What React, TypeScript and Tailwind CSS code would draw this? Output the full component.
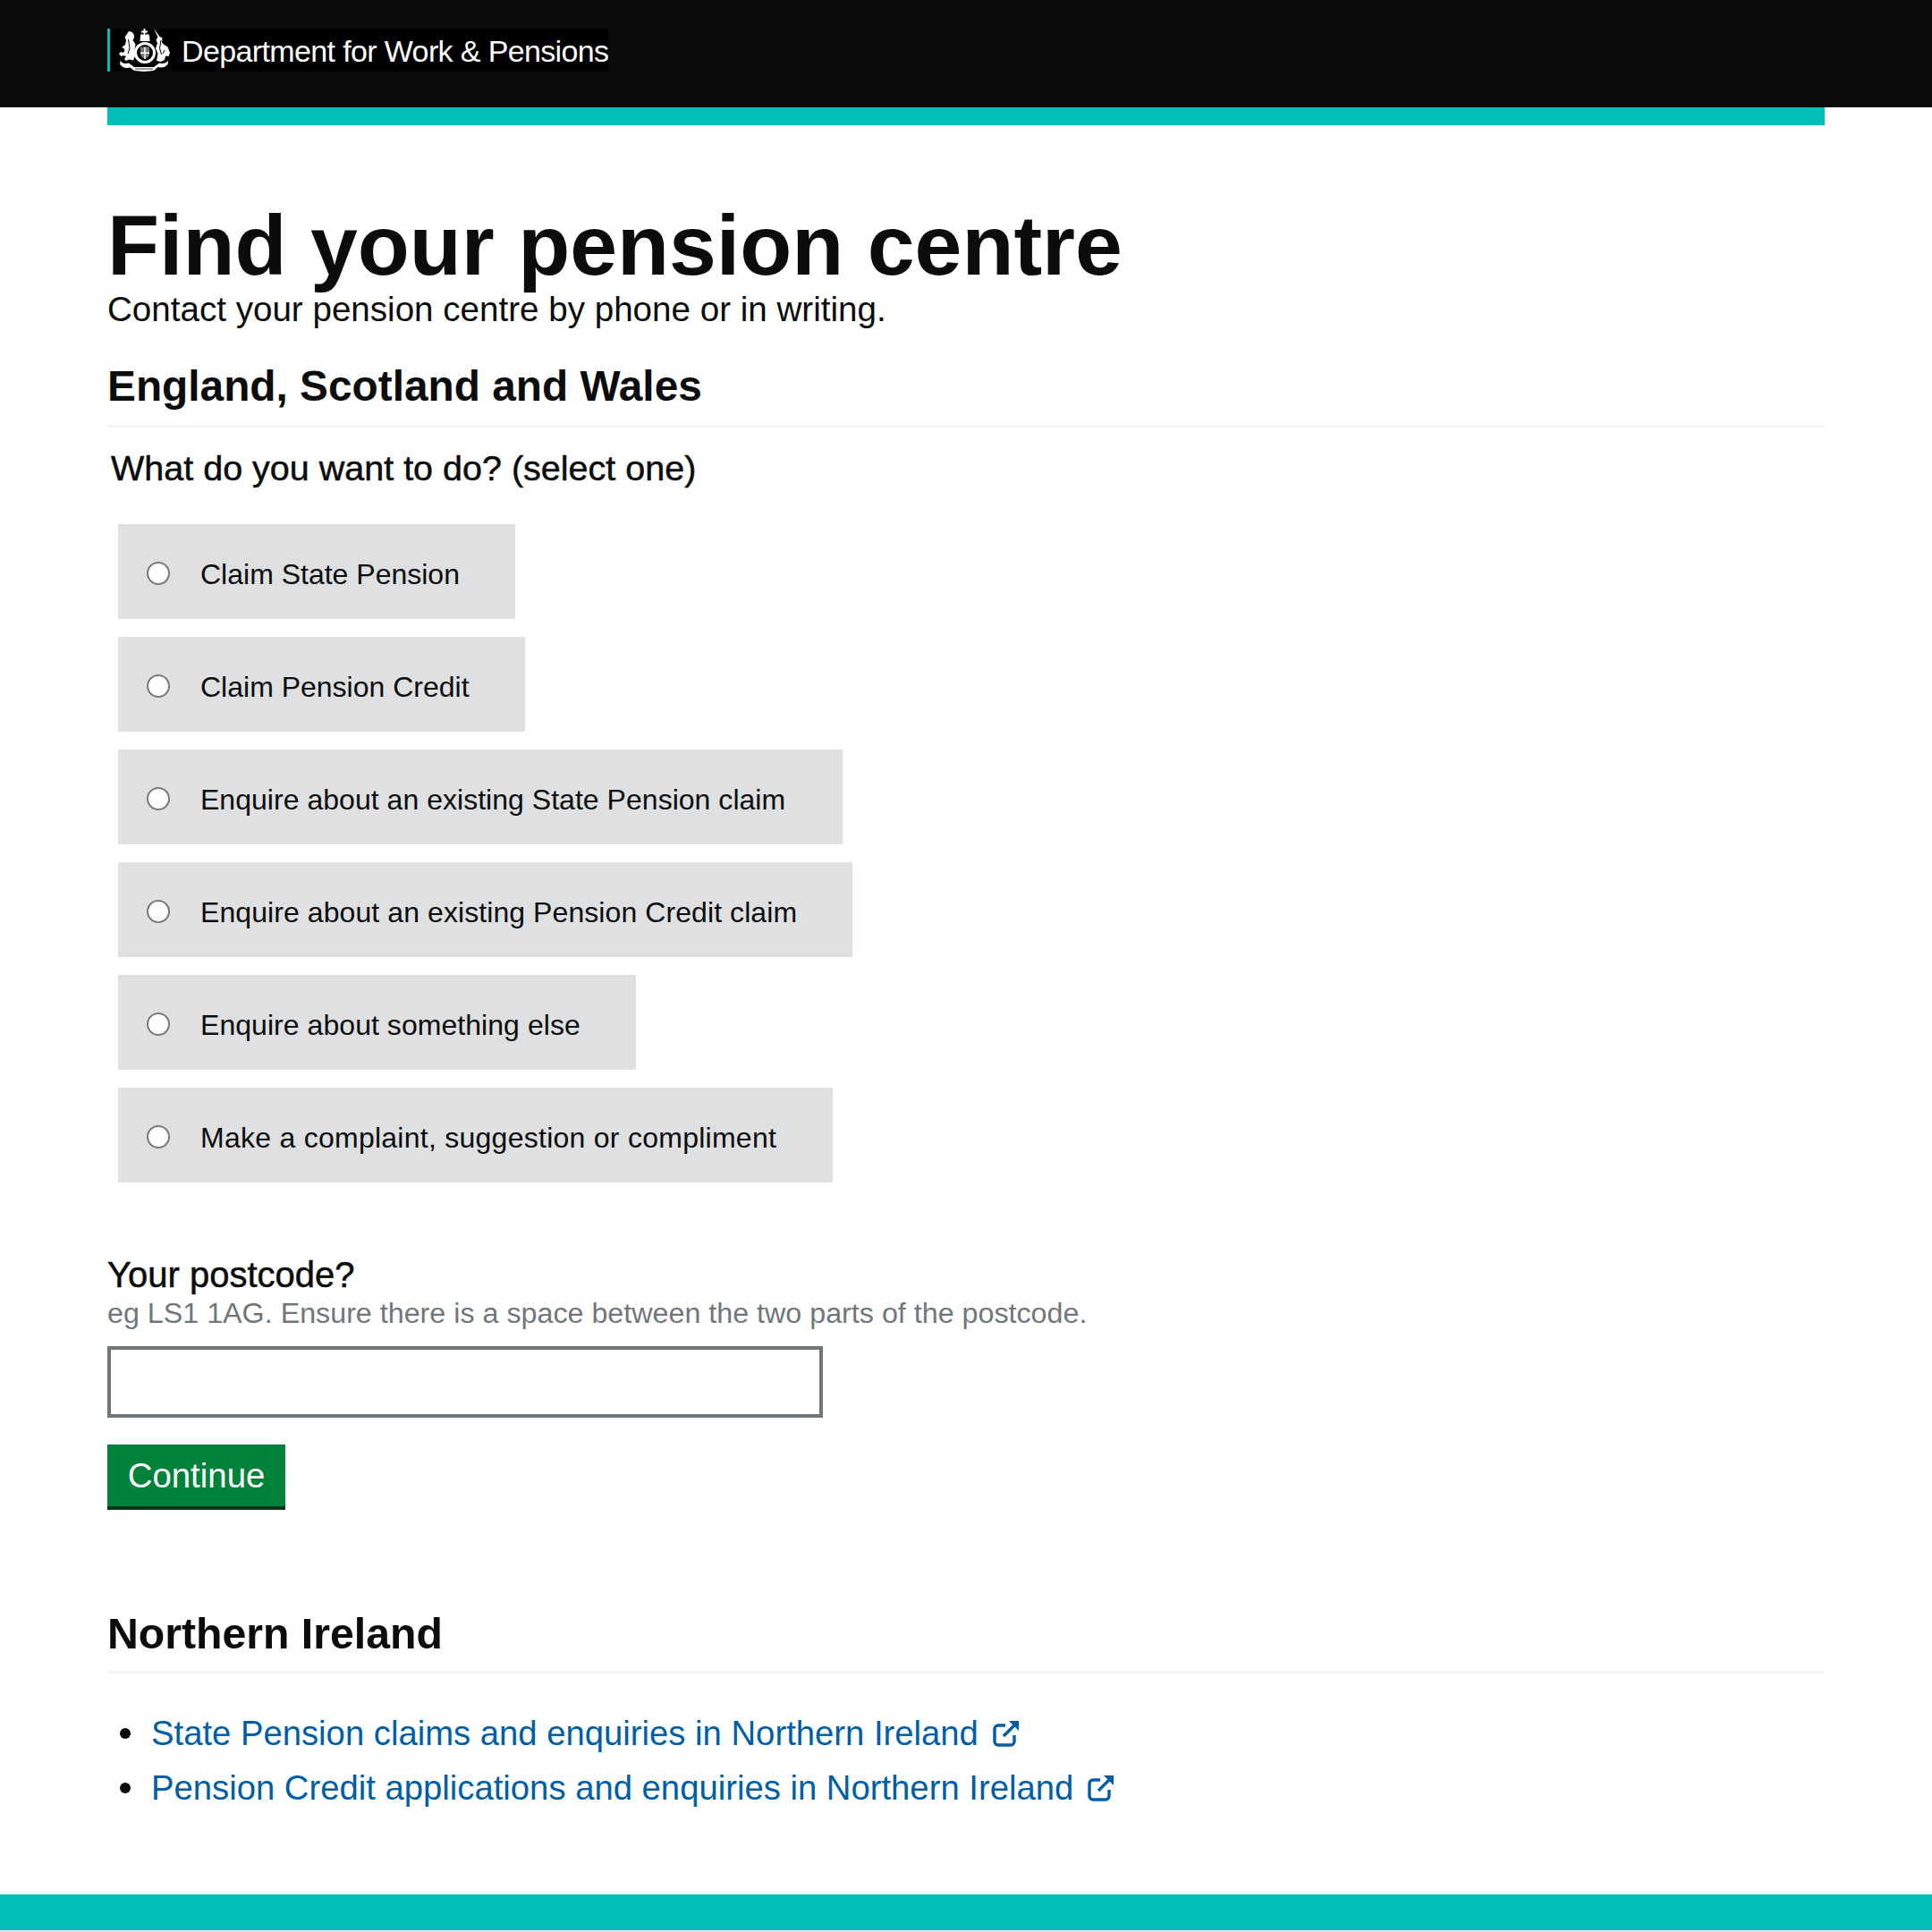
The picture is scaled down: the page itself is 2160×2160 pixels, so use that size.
import * as React from "react";

const options = [
  { label: "Claim State Pension", width: "w-[444px]", spacing: "" },
  { label: "Claim Pension Credit", width: "w-[455px]", spacing: "" },
  { label: "Enquire about an existing State Pension claim", width: "w-[810px]", spacing: "tracking-[0.03px]" },
  { label: "Enquire about an existing Pension Credit claim", width: "w-[821px]", spacing: "tracking-[0.08px]" },
  { label: "Enquire about something else", width: "w-[579px]", spacing: "tracking-[0.05px]" },
  { label: "Make a complaint, suggestion or compliment", width: "w-[799px]", spacing: "tracking-[0.26px]" },
];

const links = [
  "State Pension claims and enquiries in Northern Ireland",
  "Pension Credit applications and enquiries in Northern Ireland",
];

const Crest = () => (
  <svg viewBox="0 0 60 48" className="h-[48px] w-[60px] shrink-0" fill="#fff">
    {/* crown */}
    <path d="M29.5 0h2v2.5H34v2h-2.500V7l3-1 1.500 1.500.5 6.500h-11l.5-6.500L27 6l2.500 1V4.500H27v-2h2.500z" />
    {/* garter and shield */}
    <circle cx="31" cy="27" r="10.500" fill="none" stroke="#fff" strokeWidth="3" />
    <path d="M26 20.500h10v7c0 3.500-2.500 5.500-5 6.500-2.500-1-5-3-5-6.500z" fill="#777" />
    <path d="M30.300 20.500h1.400V34h-1.400zM26 26.500h10v1.400H26z" />
    {/* lion */}
    <path d="M13 3c4 0 6.500 3 6 7l-1.500 3 3 4.500-1 6 .5 7-2 5-5-1-3 1.500-2-2 2-3-3-1-2.500 1L2 28l2-2 2.500 1 2-2-1-3-2.500-1L9 18l1-5-1.500-3.500z" />
    <path d="M12.500 12l1.500 10-2 6" fill="none" stroke="#000" strokeWidth="1" />
    {/* unicorn */}
    <path d="M41 0l6.500 9 3 1.500-.5 5 2.500 2.500 4 2.500L59 27l-1.500 4-3.500-.5L53 35l-4 2-5-1 1.500-8-2.500-6 2-5.500-1.500-4 2-3z" />
    <path d="M49 13l-1.500 9 2 7M53 24l-2 4" fill="none" stroke="#000" strokeWidth="1" />
    {/* motto scroll */}
    <path d="M3 36c3 3 6 3.500 10 2.500l6 4.500h22l6-4.500c4 1 7 .5 10-2.500l-.5 4c-3 3.500-7 4-11 3L41 47l-11 1-11-1-4.500-3.500c-4 1-8 .5-11-3z" />
    <path d="M20 45h20" fill="none" stroke="#000" strokeWidth=".8" />
  </svg>
);

const ExternalLink = () => (
  <svg viewBox="0 0 32 32" className="ml-[15px] h-[32px] w-[32px] shrink-0" fill="none" stroke="#005ea5" strokeWidth="3.400">
    <path d="M25 18v7a4 4 0 0 1-4 4H7a4 4 0 0 1-4-4V11a4 4 0 0 1 4-4h8" />
    <path d="M13 19 27 5" />
    <path d="M19 2h11v11z" fill="#005ea5" stroke="none" />
  </svg>
);

export default function App() {
  return (
    <div className="flex h-[2160px] flex-col bg-white font-['Liberation_Sans',sans-serif] text-[#0b0c0c]">
      {/* Header */}
      <header className="h-[120px] bg-[#0b0c0c] px-[120px] pt-[32px]">
        <div className="flex h-[48px] w-fit items-center overflow-hidden border-l-[3px] border-[#00beb7] bg-black pl-[8px]">
          <Crest />
          <span className="ml-[12px] whitespace-nowrap pt-[1px] text-[34px] leading-none tracking-[-0.63px] text-white">
            Department for Work &amp; Pensions
          </span>
        </div>
      </header>

      <main className="mx-[120px] flex-1">
        <div className="h-[20px] bg-[#00beb7]" />

        <h1 className="mt-[79px] text-[95px] leading-[110px] font-bold">Find your pension centre</h1>
        <p className="mt-[-5px] text-[38.6px] leading-[44px]">Contact your pension centre by phone or in writing.</p>

        <h2 className="mt-[33px] border-b border-[#ececec] pb-[14px] text-[47.8px] leading-[61px] font-bold">
          England, Scotland and Wales
        </h2>

        <p className="mt-[24px] ml-[4px] text-[39.5px] leading-[44px] [-webkit-text-stroke:0.5px]">
          What do you want to do? (select one)
        </p>

        {/* Options */}
        <div className="mt-[41px] ml-[12px] flex flex-col gap-[20px]">
          {options.map((option) => (
            <label key={option.label} className={`flex h-[106px] items-center bg-[#dee0e2] pt-[3px] pl-[32px] ${option.width}`}>
              <span className="h-[26px] w-[26px] shrink-0 rounded-full border-2 border-[#7a7a7a] bg-white" />
              <span className={`ml-[34px] pt-[2px] text-[32px] whitespace-nowrap ${option.spacing}`}>{option.label}</span>
            </label>
          ))}
        </div>

        {/* Postcode */}
        <p className="mt-[82px] text-[40px] leading-[43px] [-webkit-text-stroke:0.5px]">Your postcode?</p>
        <p className="text-[32.25px] leading-[42px] text-[#6f777b]">
          eg LS1 1AG. Ensure there is a space between the two parts of the postcode.
        </p>
        <input className="mt-[16px] block h-[80px] w-[800px] border-[4px] border-[#6f777b] bg-white" />
        <button className="mt-[30px] block h-[73px] w-[199px] border-b-[4px] border-[#003618] bg-[#00823b] text-[38.4px] text-white">
          Continue
        </button>

        {/* Northern Ireland */}
        <h2 className="mt-[107px] border-b border-[#ececec] pb-[12px] text-[48.2px] leading-[62px] font-bold">
          Northern Ireland
        </h2>
        <ul className="mt-[46px] flex flex-col gap-[17px]">
          {links.map((link) => (
            <li key={link} className="flex items-center text-[38.25px] leading-[44px] text-[#005ea5]">
              <span className="mr-[23px] ml-[14px] h-[12px] w-[12px] shrink-0 rounded-full bg-[#0b0c0c]" />
              <a href="#">{link}</a>
              <ExternalLink />
            </li>
          ))}
        </ul>
      </main>

      <footer className="h-[42px] border-b-2 border-[#dee0e2] bg-[#00beb7]" />
    </div>
  );
}
